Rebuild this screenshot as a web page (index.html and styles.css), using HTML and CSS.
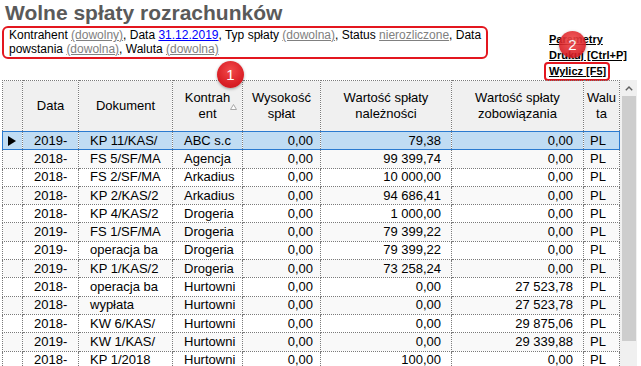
FILE: index.html
```html
<!DOCTYPE html>
<html>
<head>
    <title>Wolne spłaty rozrachunków</title>
    <link rel="stylesheet" href="styles.css">
</head>
<body>
<div class="page">
    <div class="top">
        <div class="head">
            <h1 class="title">Wolne spłaty rozrachunków</h1>
            <div class="filter">Kontrahent <a class="opt">(dowolny)</a>, Data <a class="date">31.12.2019</a>, Typ spłaty <a class="opt">(dowolna)</a>, Status <a class="opt">nierozliczone</a>, Data<br>powstania <a class="opt">(dowolna)</a>, Waluta <a class="opt">(dowolna)</a></div>
        </div>
        <div class="actions">
            <a>Parametry</a>
            <a>Drukuj [Ctrl+P]</a>
            <a class="marked">Wylicz [F5]</a>
        </div>
    </div>

    <div class="grid-wrap">
        <table class="grid">
            <colgroup>
                <col style="width:20px"><col style="width:56px"><col style="width:94px"><col style="width:70px">
                <col style="width:78px"><col style="width:131px"><col style="width:132px"><col style="width:36px">
            </colgroup>
            <thead>
                <tr>
                    <th></th>
                    <th>Data</th>
                    <th>Dokument</th>
                    <th class="sorted">Kontrah<br>ent
                        <svg class="sort" width="7" height="6" viewBox="0 0 7 6"><polygon points="3.5,0.5 6.5,5.5 0.5,5.5" fill="#fff" stroke="#a8a8a8" stroke-width="1"/></svg>
                    </th>
                    <th>Wysokość<br>spłat</th>
                    <th>Wartość spłaty<br>należności</th>
                    <th>Wartość spłaty<br>zobowiązania</th>
                    <th>Walu<br>ta</th>
                </tr>
            </thead>
            <tbody>
                <tr class="sel">
                    <td class="ind"><svg width="8" height="10" viewBox="0 0 8 10"><polygon points="0,0 8,5 0,10" fill="#000"/></svg></td>
                    <td>2019-</td><td>KP 11/KAS/</td><td>ABC s.c</td>
                    <td class="num n1">0,00</td><td class="num">79,38</td><td class="num">0,00</td><td class="cur">PL</td>
                </tr>
                <tr><td class="ind"></td><td>2018-</td><td>FS 5/SF/MA</td><td>Agencja</td><td class="num n1">0,00</td><td class="num">99 399,74</td><td class="num">0,00</td><td class="cur">PL</td></tr>
                <tr><td class="ind"></td><td>2018-</td><td>FS 2/SF/MA</td><td>Arkadius</td><td class="num n1">0,00</td><td class="num">10 000,00</td><td class="num">0,00</td><td class="cur">PL</td></tr>
                <tr><td class="ind"></td><td>2018-</td><td>KP 2/KAS/2</td><td>Arkadius</td><td class="num n1">0,00</td><td class="num">94 686,41</td><td class="num">0,00</td><td class="cur">PL</td></tr>
                <tr><td class="ind"></td><td>2018-</td><td>KP 4/KAS/2</td><td>Drogeria</td><td class="num n1">0,00</td><td class="num">1 000,00</td><td class="num">0,00</td><td class="cur">PL</td></tr>
                <tr><td class="ind"></td><td>2019-</td><td>FS 1/SF/MA</td><td>Drogeria</td><td class="num n1">0,00</td><td class="num">79 399,22</td><td class="num">0,00</td><td class="cur">PL</td></tr>
                <tr><td class="ind"></td><td>2019-</td><td>operacja ba</td><td>Drogeria</td><td class="num n1">0,00</td><td class="num">79 399,22</td><td class="num">0,00</td><td class="cur">PL</td></tr>
                <tr><td class="ind"></td><td>2019-</td><td>KP 1/KAS/2</td><td>Drogeria</td><td class="num n1">0,00</td><td class="num">73 258,24</td><td class="num">0,00</td><td class="cur">PL</td></tr>
                <tr><td class="ind"></td><td>2018-</td><td>operacja ba</td><td>Hurtowni</td><td class="num n1">0,00</td><td class="num">0,00</td><td class="num">27 523,78</td><td class="cur">PL</td></tr>
                <tr><td class="ind"></td><td>2018-</td><td>wypłata</td><td>Hurtowni</td><td class="num n1">0,00</td><td class="num">0,00</td><td class="num">27 523,78</td><td class="cur">PL</td></tr>
                <tr><td class="ind"></td><td>2018-</td><td>KW 6/KAS/</td><td>Hurtowni</td><td class="num n1">0,00</td><td class="num">0,00</td><td class="num">29 875,06</td><td class="cur">PL</td></tr>
                <tr><td class="ind"></td><td>2019-</td><td>KW 1/KAS/</td><td>Hurtowni</td><td class="num n1">0,00</td><td class="num">0,00</td><td class="num">29 339,88</td><td class="cur">PL</td></tr>
                <tr><td class="ind"></td><td>2018-</td><td>KP 1/2018</td><td>Hurtowni</td><td class="num n1">0,00</td><td class="num">100,00</td><td class="num">0,00</td><td class="cur">PL</td></tr>
            </tbody>
        </table>
        <div class="scrollbar">
            <div class="sb-up"><svg width="8" height="5" viewBox="0 0 8 5"><polyline points="0.8,4.2 4,1 7.2,4.2" fill="none" stroke="#606060" stroke-width="1.4"/></svg></div>
            <div class="sb-thumb"></div>
        </div>
    </div>

    <span class="badge b1">1</span>
    <span class="badge b2">2</span>
</div>
</body>
</html>
```

FILE: styles.css
```css
body { margin: 0; font-family: "Liberation Sans", Arial, sans-serif; color: #000; background: #fff; }
.page { position: relative; width: 641px; height: 366px; overflow: hidden; }

.top { display: grid; grid-template-columns: 549px auto; height: 80px; }
.title { margin: 1px 0 0 5px; font-size: 21px; line-height: 24px; font-weight: bold; color: #5a5a5a; }
.filter { box-sizing: border-box; width: 486px; margin: 1px 0 0 2px; padding: 0 1px 1px 5px; border: 2px solid #e3171f; border-radius: 6px; font-size: 12px; line-height: 14px; }
.filter a { text-decoration: underline; }
.opt { color: #808080; }
.date { color: #0000ff; }

.actions { display: flex; flex-direction: column; align-items: flex-start; padding-top: 31px; font-size: 11px; font-weight: bold; line-height: 16px; }
.actions a { color: #000; text-decoration: underline; }
.actions .marked { margin: -1px 0 0 -5px; padding: 0 2px 0 3px; border: 2px solid #e3171f; border-radius: 4px; line-height: 15px; }

.grid-wrap { display: flex; align-items: flex-start; margin-left: 2px; height: 286px; overflow: hidden; }
.grid { border-collapse: collapse; table-layout: fixed; width: 618px; font-size: 13px; flex: none; }
.grid th, .grid td { border: 1px dotted #7a7a7a; padding: 0; overflow: hidden; white-space: nowrap; }
.grid th { height: 50px; background: #f0f0f0; font-weight: normal; line-height: 16px; text-align: center; }
.grid td { padding-left: 11px; line-height: 16px; }
.grid tbody tr { height: 18.3px; }
.grid tbody tr:nth-child(even) td { background: #f9f9f9; }
.grid td.ind { padding-left: 5px; }
.grid td.ind svg { display: block; }
.grid td.num { padding: 0 10px 0 0; text-align: right; }
.grid td.n1 { padding-right: 7px; }
.grid td.cur { padding-left: 6px; }

.grid tr.sel td { background: #c0dcf3; border-top: 1px solid #2a7ad0; border-bottom: 1px solid #2a7ad0; }
.grid tr.sel td:first-child { border-left: 1px solid #2a7ad0; }
.grid tr.sel td:last-child { border-right: 1px solid #2a7ad0; }

.sorted { position: relative; }
.sort { position: absolute; right: 5px; bottom: 21px; }

.scrollbar { width: 17px; height: 286px; background: #f0f0f0; flex: none; }
.sb-up { height: 16px; display: flex; align-items: center; justify-content: center; }
.sb-thumb { height: 245px; margin: 0 1px 0 2px; background: #cdcdcd; }

.badge { position: absolute; width: 27px; height: 27px; border-radius: 50%; background: radial-gradient(circle at 50% 35%, #f24a4a, #d91e25 65%, #c4181f); color: #fff; font-size: 15px; line-height: 27px; text-align: center; box-shadow: 0 1px 3px rgba(0,0,0,.35); }
.b1 { left: 217px; top: 61px; }
.b2 { left: 559px; top: 31px; opacity: .9; }
```
